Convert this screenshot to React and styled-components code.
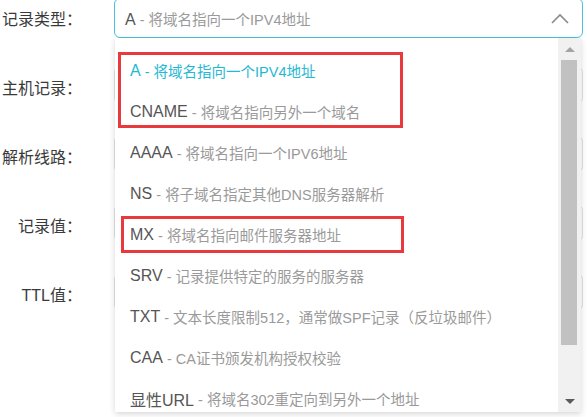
import styled, { createGlobalStyle } from 'styled-components';

const GlobalStyle = createGlobalStyle`
  html, body {
    margin: 0;
    padding: 0;
    background: #fff;
  }
  body {
    font-family: "Liberation Sans", "Noto Sans CJK SC", sans-serif;
  }
`;

const recordTypes = [
  { code: 'A', desc: '将域名指向一个IPV4地址' },
  { code: 'CNAME', desc: '将域名指向另外一个域名' },
  { code: 'AAAA', desc: '将域名指向一个IPV6地址' },
  { code: 'NS', desc: '将子域名指定其他DNS服务器解析' },
  { code: 'MX', desc: '将域名指向邮件服务器地址' },
  { code: 'SRV', desc: '记录提供特定的服务的服务器' },
  { code: 'TXT', desc: '文本长度限制512，通常做SPF记录（反垃圾邮件）' },
  { code: 'CAA', desc: 'CA证书颁发机构授权校验' },
  { code: '显性URL', desc: '将域名302重定向到另外一个地址' }
];

const Page = styled.div`
  width: 587px;
  height: 417px;
  overflow: hidden;
  position: relative;
`;

const Form = styled.div`
  display: flex;
  flex-direction: column;
  gap: 29px;
  margin-top: -2px;
  padding-right: 4px;
`;

const Row = styled.div`
  display: flex;
  align-items: center;
  height: 40px;
  position: relative;
  z-index: ${({ raised }) => (raised ? 2 : 1)};
`;

const Label = styled.label`
  width: 82px;
  margin-right: 32px;
  text-align: right;
  font-size: 16px;
  color: #3a3a3a;
  white-space: nowrap;
  flex-shrink: 0;
`;

const Field = styled.div`
  flex: 1;
  position: relative;
  height: 100%;
`;

const SelectBox = styled.div`
  height: 100%;
  box-sizing: border-box;
  border: 1px solid #45c3da;
  border-radius: 6px;
  display: flex;
  align-items: center;
  justify-content: space-between;
  padding: 0 12px 0 10px;
  background: #fff;
`;

const Input = styled.div`
  height: 36px;
  box-sizing: border-box;
  border: 1px solid #e2e2e2;
  border-radius: 5px;
  background: #fff;
`;

const Code = styled.span`
  font-size: 16px;
  color: ${({ active }) => (active ? '#25b8d3' : '#555')};
`;

const Desc = styled.span`
  font-size: 14.5px;
  color: ${({ active }) => (active ? '#25b8d3' : '#9a9a9a')};
`;

const Dropdown = styled.div`
  position: absolute;
  top: 40px;
  left: 1px;
  right: 2px;
  height: 374px;
  background: #fff;
  box-shadow: 0 2px 6px rgba(0, 0, 0, 0.16);
  display: flex;
  overflow: hidden;
`;

const OptionList = styled.ul`
  list-style: none;
  margin: 0;
  padding: 12px 0 0;
  flex: 1;
  overflow: hidden;
`;

const Option = styled.li`
  height: 41px;
  display: flex;
  align-items: center;
  padding-left: 15px;
  white-space: nowrap;
`;

const Scrollbar = styled.div`
  width: 23px;
  background: #f1f1f1;
  display: flex;
  flex-direction: column;
  align-items: center;
`;

const ArrowButton = styled.div`
  height: 22px;
  width: 100%;
  display: flex;
  align-items: center;
  justify-content: center;

  &::before {
    content: '';
    width: 0;
    height: 0;
    border-left: 5px solid transparent;
    border-right: 5px solid transparent;
    ${({ down }) =>
      down ? 'border-top: 5px solid #5a5a5a;' : 'border-bottom: 5px solid #a3a3a3;'}
  }
`;

const Thumb = styled.div`
  width: 16px;
  height: 285px;
  background: #c1c1c1;
  margin-left: -1px;
`;

const Spacer = styled.div`
  flex: 1;
`;

const Mark = styled.div`
  position: absolute;
  border: 3px solid #e8393d;
  pointer-events: none;
`;

const Chevron = () => (
  <svg width="20" height="12" viewBox="0 0 20 12">
    <polyline points="2,11 10,3 18,11" fill="none" stroke="#8a8a8a" strokeWidth="1.6" />
  </svg>
);

const App = () => {
  const selected = 0;

  return (
    <Page>
      <GlobalStyle />
      <Form>
        <Row raised>
          <Label>记录类型：</Label>
          <Field>
            <SelectBox>
              <span>
                <Code>A</Code>
                <Desc> - 将域名指向一个IPV4地址</Desc>
              </span>
              <Chevron />
            </SelectBox>
            <Dropdown>
              <OptionList>
                {recordTypes.map((item, i) => (
                  <Option key={item.code}>
                    <Code active={i === selected}>{item.code}</Code>
                    <Desc active={i === selected}>&nbsp;- {item.desc}</Desc>
                  </Option>
                ))}
              </OptionList>
              <Scrollbar>
                <ArrowButton />
                <Thumb />
                <Spacer />
                <ArrowButton down />
              </Scrollbar>
              <Mark style={{ left: 3, top: 14, width: 279, height: 70 }} />
              <Mark style={{ left: 6, top: 178, width: 277, height: 31 }} />
            </Dropdown>
          </Field>
        </Row>
        <Row>
          <Label>主机记录：</Label>
          <Field><Input /></Field>
        </Row>
        <Row>
          <Label>解析线路：</Label>
          <Field><Input /></Field>
        </Row>
        <Row>
          <Label>记录值：</Label>
          <Field><Input /></Field>
        </Row>
        <Row>
          <Label>TTL值：</Label>
          <Field><Input /></Field>
        </Row>
      </Form>
    </Page>
  );
};

export default App;
